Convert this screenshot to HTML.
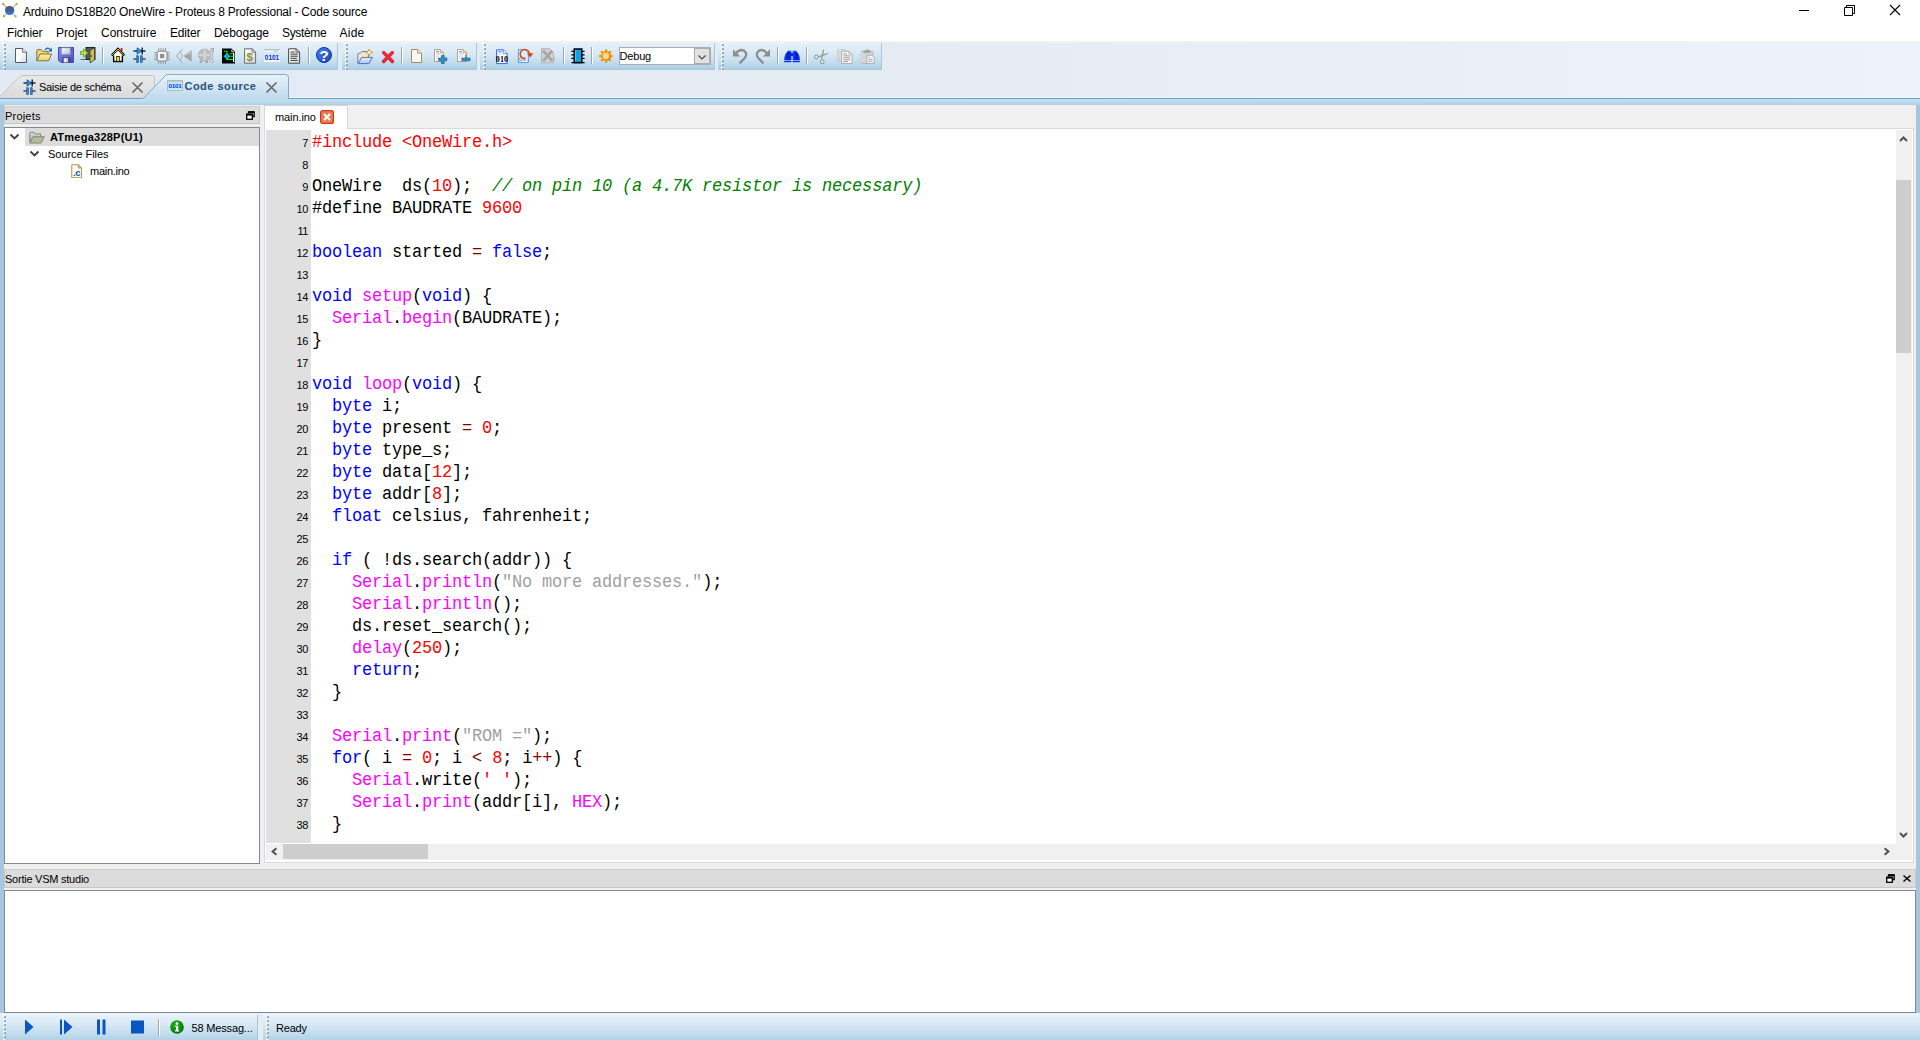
<!DOCTYPE html>
<html><head><meta charset="utf-8"><title>Proteus</title>
<style>
*{box-sizing:border-box;margin:0;padding:0}
html,body{width:1920px;height:1040px;overflow:hidden;background:#f0f0f0}
body{font-family:"Liberation Sans",sans-serif;font-size:11px;color:#000;position:relative}
.a{position:absolute}
.t{position:absolute;white-space:pre;line-height:14px;height:14px}
#title{left:0;top:0;width:1920px;height:23px;background:#fff}
#menu{left:0;top:23px;width:1920px;height:18px;background:#fff}
#tbarea{left:0;top:41px;width:1920px;height:57px;background:linear-gradient(90deg,#e3eaf3 0%,#e4ebf3 45%,#ecf3fa 100%)}
#tbtop{left:0;top:41px;width:1920px;height:2px;background:linear-gradient(#f3f3f3,#edf0f3)}
.tb{position:absolute;top:43px;height:27px;background:linear-gradient(#e5f0f8 0%,#dcebf5 30%,#cbe2f1 60%,#b6d6ea 85%,#a7c9df 100%);border-right:1px solid #a6c7dc}
.grip{position:absolute;top:0px;width:3px;height:27px;background:repeating-linear-gradient(transparent 0,transparent 1px,#98abba 1px,#98abba 3px,transparent 3px,transparent 4px) 1px 0/2px 100% no-repeat,repeating-linear-gradient(#fff 0,#fff 2px,transparent 2px,transparent 4px) 0 0/2px 100% no-repeat}
.sep{position:absolute;top:47px;width:1px;height:17px;background:#a0a6ac;box-shadow:1px 0 0 #fbfdfe}
.ic{position:absolute;width:16px;height:16px}
#band{left:0;top:97px;width:1920px;height:8px;background:linear-gradient(#f0f7fa 0,#f0f7fa 1px,#6f9dbd 1px,#6f9dbd 2px,#c4e2f5 2px,#b9d9ec 5px,#aecfe3 8px)}
#ledge{left:0;top:105px;width:4px;height:908px;background:#a8c6dd}
#redge{left:1916px;top:105px;width:4px;height:908px;background:#a8c6dd}
.dockh{position:absolute;background:#dcdcdc;border:1px solid #c6c6c6;border-top-color:#cfcfcf}
.box{position:absolute;background:#fff;border:1px solid #828790}
#status{left:0;top:1013px;width:1920px;height:27px;background:linear-gradient(#e9f3fa 0%,#dcebf5 35%,#c6dfef 70%,#b2d2e6 100%)}
.code{position:absolute;left:312px;font-family:"Liberation Mono",monospace;font-size:17px;letter-spacing:-0.2px;line-height:22px;height:22px;white-space:pre;color:#000;transform:scaleY(1.06);transform-origin:0 15px}
.ln{position:absolute;left:266px;width:42px;text-align:right;font-size:11px;letter-spacing:-0.4px;line-height:22px;height:22px;color:#000}
.k{color:#0000ff}.f{color:#ff00ff}.n{color:#ff0000}.p{color:#ff0000}.c{color:#008000;font-style:italic}.s{color:#a0a0a0}.o{color:#800000}
</style></head>
<body>
<div id="title" class="a"></div>
<svg class="ic" style="left:0px;top:0px;width:20px;height:20px" viewBox="0 0 20 20" >
<defs><linearGradient id="apg" x1="0" y1="0" x2="0" y2="1"><stop offset="0" stop-color="#3a475e"/><stop offset=".45" stop-color="#4a5c7c"/><stop offset=".62" stop-color="#3a6ab8"/><stop offset="1" stop-color="#2f7ae4"/></linearGradient></defs>
<path d="M3.2 4L15.6 16.3M16.5 4.2L4 16.2" stroke="#b4b8c2" stroke-width="1.1"/>
<path d="M3.4 6.6Q6 9 8 14.6M16.4 6.6Q14 9 11.6 14.6" stroke="#dcdee4" stroke-width=".8" fill="none"/>
<circle cx="9.6" cy="10.5" r="4.6" fill="url(#apg)"/>
<ellipse cx="9.4" cy="8.2" rx="2.6" ry="1.6" fill="#5a6a88" opacity=".55"/>
<circle cx="3.2" cy="4" r="1.15" fill="#c89c30"/><circle cx="16.5" cy="4.2" r="1.15" fill="#c89c30"/>
<circle cx="4" cy="16.2" r="1.15" fill="#c89c30"/><circle cx="15.6" cy="16.3" r="1.15" fill="#c89c30"/>
</svg>
<div class="t" style="left:23px;top:5px;font-size:12px;letter-spacing:-0.205px;">Arduino DS18B20 OneWire - Proteus 8 Professional - Code source</div>
<svg class="a" style="left:1790px;top:0;width:130px;height:23px" viewBox="0 0 130 23"><path d="M9 10.5H19" stroke="#000" stroke-width="1" fill="none"/><path d="M54.5 7.5H62.5V15.5H54.5Z M56.5 7.5V5.5H64.5V13.5H62.5" stroke="#000" stroke-width="1" fill="none"/><path d="M100 5L110 15M110 5L100 15" stroke="#000" stroke-width="1.1" fill="none"/></svg>
<div id="menu" class="a"></div>
<div class="t" style="left:7px;top:26px;font-size:12px;letter-spacing:-0.07px;">Fichier</div>
<div class="t" style="left:56px;top:26px;font-size:12px;">Projet</div>
<div class="t" style="left:101px;top:26px;font-size:12px;">Construire</div>
<div class="t" style="left:170px;top:26px;font-size:12px;letter-spacing:-0.17px;">Editer</div>
<div class="t" style="left:214px;top:26px;font-size:12px;letter-spacing:-0.05px;">Débogage</div>
<div class="t" style="left:282px;top:26px;font-size:12px;letter-spacing:-0.34px;">Système</div>
<div class="t" style="left:339.5px;top:26px;font-size:12px;letter-spacing:0.24px;">Aide</div>
<div id="tbarea" class="a"></div><div id="tbtop" class="a"></div>
<div class="tb" style="left:0px;width:338px"><div class="grip" style="left:3px"></div></div>
<div class="tb" style="left:342px;width:135px"><div class="grip" style="left:3px"></div></div>
<div class="tb" style="left:480px;width:235px"><div class="grip" style="left:3px"></div></div>
<div class="tb" style="left:718px;width:164px"><div class="grip" style="left:3px"></div></div>
<div class="sep" style="left:102px"></div>
<div class="sep" style="left:308px"></div>
<div class="sep" style="left:401px"></div>
<div class="sep" style="left:563px"></div>
<div class="sep" style="left:591px"></div>
<div class="sep" style="left:777px"></div>
<div class="sep" style="left:806px"></div>
<svg class="ic" style="left:13px;top:47px;width:16px;height:16px" viewBox="0 0 16 16" preserveAspectRatio="none">
<defs><linearGradient id="nwg" x1="0" y1="0" x2="1" y2="1"><stop offset="0" stop-color="#fff"/><stop offset=".5" stop-color="#fbfbfb"/><stop offset="1" stop-color="#d4d9dd"/></linearGradient></defs>
<path d="M2.5 1.5H9.6L13.5 5.2V15.5H2.5Z" fill="url(#nwg)" stroke="#5a5a5a"/>
<path d="M9.6 1.5V5.2H13.5" fill="#fff" stroke="#5a5a5a" stroke-width=".9"/>
</svg>
<svg class="ic" style="left:36px;top:47px;width:16px;height:16px" viewBox="0 0 16 16" preserveAspectRatio="none">
<defs><linearGradient id="ofg" x1="0" y1="0" x2="0" y2="1"><stop offset="0" stop-color="#fbf3a0"/><stop offset="1" stop-color="#e2d268"/></linearGradient></defs>
<path d="M9 3Q11.6 -0.4 14.6 2.6" stroke="#2a5cb0" stroke-width="1.2" fill="none"/>
<path d="M15.8 0.8V4.4H12.2Z" fill="#1c4fa0"/>
<path d="M0.8 13.6V3.6Q0.8 2.6 1.8 2.6H5.2L6.8 4.4H12V7" fill="#e8d878" stroke="#8a7040"/>
<path d="M0.8 13.8L4 7H15.6L12.6 13.8Z" fill="url(#ofg)" stroke="#8a7040"/>
</svg>
<svg class="ic" style="left:58px;top:47px;width:16px;height:16px" viewBox="0 0 16 16" preserveAspectRatio="none">
<defs><linearGradient id="svg1" x1="0" y1="0" x2="1" y2="1"><stop offset="0" stop-color="#8a8aec"/><stop offset="1" stop-color="#5252bc"/></linearGradient>
<linearGradient id="svg2" x1="0" y1="0" x2="1" y2="1"><stop offset="0" stop-color="#fff"/><stop offset="1" stop-color="#a9c4d0"/></linearGradient></defs>
<path d="M0.5 0.5H15.5V15.5H2.8L0.5 13.2Z" fill="url(#svg1)" stroke="#4a4ab0"/>
<rect x="3.6" y="0.9" width="8.6" height="6.4" fill="url(#svg2)" stroke="#8c94c8" stroke-width=".6"/>
<rect x="4.4" y="10.4" width="8" height="5" fill="#3c3c94"/>
<rect x="5.6" y="11" width="4.6" height="4.4" fill="#c8c8c8"/>
<rect x="6.4" y="11.6" width="1.6" height="3.4" fill="#fff"/>
<rect x="13.4" y="2" width="1" height="1.2" fill="#222"/>
<rect x="13.2" y="11" width="1" height="4" fill="#4a4ab0"/>
</svg>
<svg class="ic" style="left:80px;top:47px;width:16px;height:16px" viewBox="0 0 16 16" preserveAspectRatio="none">
<rect x="6" y="0.5" width="9" height="12" fill="#5a5a5a" stroke="#222"/>
<path d="M10 3.5L14.5 0.8V13L10 15.8Z" fill="#cdbf5e" stroke="#3a3a1a" stroke-width=".8"/>
<circle cx="11.3" cy="9" r=".7" fill="#222"/>
<path d="M0.5 4.5H3.5V1.8L7.8 6L3.5 10.2V7.5H0.5Z" fill="#b6e34a" stroke="#5e9a1c" stroke-width=".8"/>
<path d="M0.5 12.5H6" stroke="#666" stroke-width="1"/>
</svg>
<svg class="ic" style="left:111px;top:47px;width:14px;height:16px" viewBox="0 0 16 16" preserveAspectRatio="none">
<path d="M3 8V14.5H13V8" fill="#fff" stroke="#000" stroke-width="1.6"/>
<path d="M0.8 8.4L8 1.8L15.2 8.4" fill="#fff" stroke="#000" stroke-width="2.4" stroke-linejoin="miter"/>
<path d="M1.4 8L8 2L14.6 8" fill="none" stroke="#ffe800" stroke-width=".9"/>
<rect x="6.5" y="9.5" width="3" height="5" fill="#ffe800" stroke="#000" stroke-width=".8"/>
<rect x="11.2" y="1" width="1.8" height="3.6" fill="#e00000"/>
</svg>
<svg class="ic" style="left:133px;top:47px;width:13px;height:16px" viewBox="0 0 16 16" preserveAspectRatio="none">
<path d="M0.5 4H15.5" stroke="#000" stroke-width="1.2"/>
<path d="M5 0.8V7.2L11 4Z" fill="#1e96f0" stroke="#0a3c8a" stroke-width=".7"/>
<path d="M11.3 0.4V7.6" stroke="#000" stroke-width="1.5"/>
<path d="M0.5 12H4.5M11.5 12H15.5" stroke="#000" stroke-width="1.2"/>
<rect x="4.6" y="8.8" width="2.3" height="6.6" fill="#1e82e0" stroke="#062a66" stroke-width=".5"/>
<rect x="9.1" y="8.8" width="2.3" height="6.6" fill="#1e82e0" stroke="#062a66" stroke-width=".5"/>
</svg>
<svg class="ic" style="left:154px;top:47.5px;width:16px;height:16px" viewBox="0 0 16 16" preserveAspectRatio="none">
<g stroke="#8c8c8c" stroke-width=".9" fill="none">
<path d="M4.6 0.2V3M6.9 0.2V3M9.2 0.2V3M11.5 0.2V3M4.6 13V15.8M6.9 13V15.8M9.2 13V15.8M11.5 13V15.8M0.2 4.6H3M0.2 6.9H3M0.2 9.2H3M0.2 11.5H3M13 4.6H15.8M13 6.9H15.8M13 9.2H15.8M13 11.5H15.8"/>
<rect x="3.2" y="3.2" width="9.8" height="9.8" rx="1.4" fill="#f0f5f9" stroke-width="1.1"/>
</g>
<rect x="6" y="6" width="4.2" height="4.2" fill="#909090"/>
</svg>
<svg class="ic" style="left:176px;top:47.5px;width:16px;height:16px" viewBox="0 0 16 16" preserveAspectRatio="none">
<path d="M6.2 1.2L0.6 8L6.2 14.8" fill="none" stroke="#a2a2a2" stroke-width="1"/>
<path d="M4.6 3.6Q7.4 8 4.6 12.4" fill="none" stroke="#b4b4b4" stroke-width=".9"/>
<path d="M7.4 8L15.6 2.2V13.8Z" fill="#a4a4a4"/>
<path d="M7.4 8L15.6 2.2V6Z" fill="#bcbcbc"/>
</svg>
<svg class="ic" style="left:198px;top:47.5px;width:16px;height:16px" viewBox="0 0 16 16" preserveAspectRatio="none">
<circle cx="6.6" cy="7" r="6" fill="#bdbdbd" stroke="#a4a4a4" stroke-width=".8"/>
<path d="M6.6 1.2V12.8M0.8 7H12.4" stroke="#dedede" stroke-width="1.3"/>
<rect x="4.8" y="5.2" width="3.6" height="3.6" fill="#d0d0d0"/>
<rect x="1.6" y="12.6" width="2.4" height="2.4" fill="#a8a8a8"/><rect x="7.6" y="12.6" width="2.4" height="2.4" fill="#a8a8a8"/>
<rect x="13" y="0.4" width="2.6" height="2.6" fill="#e4e4e4" stroke="#9a9a9a" stroke-width=".8"/>
<path d="M14.4 3V11" stroke="#a8a8a8" stroke-width=".9"/>
<path d="M13.4 10.6L15.8 13L13.8 15L11.4 12.6Z" fill="#dcdcdc" stroke="#a0a0a0" stroke-width=".8"/>
</svg>
<svg class="ic" style="left:221px;top:47.5px;width:16px;height:16px" viewBox="0 0 16 16" preserveAspectRatio="none">
<path d="M1 0.4H10.2L14 4V15.4H1Z" fill="#000"/>
<path d="M10 0.8V4.2H13.6Z" fill="#fff" stroke="#000" stroke-width=".7"/>
<rect x="12" y="4.6" width="1.3" height="9.4" fill="#fff"/>
<path d="M2.6 3.2H6V8.2M2.6 8.2H12M6 8.2V11.4H12M8.6 5.8H12" stroke="#00f000" stroke-width="1.1" fill="none"/>
<path d="M6 5L8.8 8.2L6 11.4L3.2 8.2Z" fill="#00e8ff"/>
<rect x="5.4" y="6.8" width="1.2" height="2.8" fill="#0a3cc8"/>
</svg>
<svg class="ic" style="left:242px;top:47.5px;width:16px;height:16px" viewBox="0 0 16 16" preserveAspectRatio="none">
<defs><linearGradient id="bmg" x1="0" y1="0" x2="1" y2="1"><stop offset="0" stop-color="#fff"/><stop offset="1" stop-color="#d4d8dc"/></linearGradient></defs>
<path d="M2.6 0.8H10L13.6 4.2V15.2H2.6Z" fill="url(#bmg)" stroke="#6a6a6a"/>
<path d="M10 0.8V4.2H13.6Z" fill="#f4f4f4" stroke="#6a6a6a" stroke-width=".8"/>
<text x="7.8" y="13.2" font-family="Liberation Sans" font-size="11.5" font-weight="bold" fill="#8e8e3a" text-anchor="middle">$</text>
</svg>
<svg class="ic" style="left:264px;top:48.5px;width:16px;height:13px" viewBox="0 0 16 13" preserveAspectRatio="none">
<rect x="0" y="0" width="16" height="13" fill="#f2f6fa"/>
<rect x="0" y="0" width="16" height="1.6" fill="#b9bec4"/>
<rect x="0" y="1.6" width="16" height="1.8" fill="#f4f4f4"/>
<rect x="10" y="2" width="4" height="1" fill="#c8ccd0"/>
<rect x="0" y="3.4" width="16" height="4" fill="#c4ecf8"/>
<text x="8" y="10.6" font-family="Liberation Sans" font-size="6.6" font-weight="bold" fill="#2222e0" text-anchor="middle" letter-spacing="-.1">0101</text>
</svg>
<svg class="ic" style="left:286px;top:47.5px;width:16px;height:16px" viewBox="0 0 16 16" preserveAspectRatio="none">
<defs><linearGradient id="ntg" x1="0" y1="0" x2="1" y2="1"><stop offset="0" stop-color="#fff"/><stop offset="1" stop-color="#dcdfe2"/></linearGradient></defs>
<path d="M2.6 0.8H10L13.6 4.2V15.2H2.6Z" fill="url(#ntg)" stroke="#444"/>
<path d="M10 0.8V4.2H13.6Z" fill="#f4f4f4" stroke="#444" stroke-width=".8"/>
<path d="M4.4 4H8.6M4.4 6.1H11.8M4.4 8.2H11.8M4.4 10.3H10.8M4.4 12.4H11.8" stroke="#3c3c3c" stroke-width="1"/>
</svg>
<svg class="ic" style="left:316px;top:47px;width:16px;height:16px" viewBox="0 0 16 16" preserveAspectRatio="none">
<defs><linearGradient id="hg" x1="0" y1="0" x2="1" y2="1"><stop offset="0" stop-color="#5484ea"/><stop offset=".5" stop-color="#3562cc"/><stop offset="1" stop-color="#1c44a4"/></linearGradient></defs>
<circle cx="8" cy="8" r="7.5" fill="url(#hg)" stroke="#0a34c4" stroke-width="1"/>
<text x="8.1" y="13.5" font-family="Liberation Sans" font-size="15.5" font-weight="bold" fill="#fff" text-anchor="middle">?</text>
</svg>
<svg class="ic" style="left:356.5px;top:49px;width:16px;height:16px" viewBox="0 0 16 16" preserveAspectRatio="none">
<defs><linearGradient id="opg" x1="0" y1="0" x2="0" y2="1"><stop offset="0" stop-color="#e4eefc"/><stop offset="1" stop-color="#a9c8f0"/></linearGradient></defs>
<path d="M0.8 14.2V5.2Q0.8 4.4 1.6 4.4H3.2L4.8 2.6H11.4V8" fill="#f6e6c4" stroke="#6a6cc0" stroke-width=".9"/>
<path d="M1 14.6L4.6 8.4H15.4L11.8 14.6Z" fill="url(#opg)" stroke="#4a5cc0" stroke-width=".9"/>
<path d="M12.2 -0.4L13.2 2.4L16 3.4L13.2 4.4L12.2 7.2L11.2 4.4L8.4 3.4L11.2 2.4Z" fill="#fffbe8" stroke="#c8981a" stroke-width=".8"/>
</svg>
<svg class="ic" style="left:379.5px;top:48.5px;width:16px;height:16px" viewBox="0 0 16 16" preserveAspectRatio="none">
<defs><linearGradient id="rxg" x1="0" y1="0" x2="0" y2="1"><stop offset="0" stop-color="#f04a58"/><stop offset="1" stop-color="#d81828"/></linearGradient></defs>
<path d="M3.6 3.6L12.4 12.4M12.4 3.6L3.6 12.4" stroke="url(#rxg)" stroke-width="3.6" stroke-linecap="round" fill="none"/>
<path d="M3.6 3.6L12.4 12.4M12.4 3.6L3.6 12.4" stroke="#e62c3c" stroke-width="2.6" stroke-linecap="round" fill="none"/>
</svg>
<svg class="ic" style="left:408px;top:48px;width:16px;height:16px" viewBox="0 0 16 16" preserveAspectRatio="none">
<path d="M3.5 1.5H9.6L13.5 5.2V14.5H3.5Z" fill="#f6f8fd" stroke="#a88a4a"/>
<path d="M9.6 1.5V5.2H13.5" fill="#ece6d4" stroke="#a88a4a" stroke-width=".8"/>
</svg>
<svg class="ic" style="left:432px;top:48px;width:16px;height:16px" viewBox="0 0 16 16" preserveAspectRatio="none">
<path d="M2.5 1.5H8.2L11.5 4.6V13.5H2.5Z" fill="#fbfcfe" stroke="#a89a74" stroke-width=".9"/>
<path d="M8.2 1.5V4.6H11.5" fill="#ecd9a8" stroke="#a89a74" stroke-width=".7"/>
<path d="M4.2 3.8H7" stroke="#5a78b4" stroke-width="1"/>
<path d="M4.2 6H9.4M4.2 8.2H6.4M4.2 10.4H5.6" stroke="#b4c0d4" stroke-width=".9"/>
<path d="M9.4 7.4H12.2V10H14.9V12.8H12.2V15.6H9.4V12.8H6.6V10H9.4Z" fill="#3a8cc0" stroke="#1f648f" stroke-width=".7" stroke-linejoin="round"/>
</svg>
<svg class="ic" style="left:455px;top:48px;width:16px;height:16px" viewBox="0 0 16 16" preserveAspectRatio="none">
<path d="M2.5 1.5H8.2L11.5 4.6V13.5H2.5Z" fill="#fbfcfe" stroke="#a89a74" stroke-width=".9"/>
<path d="M8.2 1.5V4.6H11.5" fill="#ecd9a8" stroke="#a89a74" stroke-width=".7"/>
<path d="M4.2 3.8H7" stroke="#5a78b4" stroke-width="1"/>
<path d="M4.2 6H9.4M4.2 8.2H7.4M4.2 10.4H5.6" stroke="#b4c0d4" stroke-width=".9"/>
<path d="M10.8 6.6V10" stroke="#1f648f" stroke-width=".9"/>
<rect x="6.6" y="10" width="8.6" height="2.8" rx="1" fill="#3a8cc0" stroke="#1f648f" stroke-width=".7"/>
</svg>
<svg class="ic" style="left:494px;top:48.5px;width:16px;height:16px" viewBox="0 0 16 16" preserveAspectRatio="none">
<path d="M2.6 0.8H9.2L13.2 4.6V14.6H2.6Z" fill="#fff" stroke="#2a6ae0" stroke-width="1"/>
<path d="M9.2 0.8V4.6H13.2" fill="#e4edfc" stroke="#2a6ae0" stroke-width=".7"/>
<path d="M4.2 2.8H7.6" stroke="#4a86e8" stroke-width="1.1"/>
<path d="M3.4 5H10" stroke="#c4d8f8" stroke-width=".9"/>
<text x="8" y="12.9" font-family="Liberation Serif" font-size="8" font-weight="bold" fill="#000" text-anchor="middle" letter-spacing=".2">010</text>
</svg>
<svg class="ic" style="left:516.5px;top:48px;width:16px;height:16px" viewBox="0 0 16 16" preserveAspectRatio="none">
<path d="M1.4 1.6H8L11.4 4.8V14.6H1.4Z" fill="#dfeafc" stroke="#5a8ce4" stroke-width=".9"/>
<text x="5.6" y="13" font-family="Liberation Serif" font-size="7" fill="#7a86b0" text-anchor="middle">01</text>
<path d="M12.4 6.4A4.6 4.6 0 1 0 8.6 10.6" stroke="#d8480c" stroke-width="1.5" fill="none"/>
<path d="M10 5.2H16.4L13.2 9.6Z" fill="#d8480c"/>
</svg>
<svg class="ic" style="left:540px;top:48px;width:16px;height:16px" viewBox="0 0 16 16" preserveAspectRatio="none">
<path d="M1.6 0.6H9.6L13.4 4.2V14.8H1.6Z" fill="#d2d2d2" stroke="#b0b0b0" stroke-width=".9"/>
<path d="M3.2 2.6L12.2 13M12.2 2.6L3.2 13" stroke="#a4a4a4" stroke-width="2.6"/>
<path d="M13.4 8Q15.4 10 13.6 13" stroke="#bcbcbc" stroke-width="1" fill="none"/>
</svg>
<svg class="ic" style="left:569.5px;top:47.5px;width:16px;height:16px" viewBox="0 0 16 16" preserveAspectRatio="none">
<g stroke="#000" stroke-width="1.2"><path d="M1.4 3.4H4.2M1.4 6.9H4.2M1.4 10.4H4.2M11.8 3.4H14.6M11.8 6.9H14.6M11.8 10.4H14.6M1.4 14.6H14.6"/></g>
<rect x="4.2" y="1" width="7.6" height="13.6" fill="#12a0e8" stroke="#000" stroke-width="1.5"/>
<path d="M5.4 2.4V13.4" stroke="#5ac4f6" stroke-width="1"/>
</svg>
<svg class="ic" style="left:598.5px;top:48.5px;width:14px;height:14px" viewBox="0 0 16 16" preserveAspectRatio="none">
<defs><linearGradient id="grg" x1="0" y1="0" x2="1" y2="1"><stop offset="0" stop-color="#fbb324"/><stop offset="1" stop-color="#e8780a"/></linearGradient></defs>
<g fill="url(#grg)">
<circle cx="8" cy="8" r="5.8"/>
<g><rect x="6.6" y="0.2" width="2.8" height="3" rx=".7"/><rect x="6.6" y="12.8" width="2.8" height="3" rx=".7"/></g>
<g transform="rotate(45 8 8)"><rect x="6.6" y="0.2" width="2.8" height="3" rx=".7"/><rect x="6.6" y="12.8" width="2.8" height="3" rx=".7"/></g><g transform="rotate(90 8 8)"><rect x="6.6" y="0.2" width="2.8" height="3" rx=".7"/><rect x="6.6" y="12.8" width="2.8" height="3" rx=".7"/></g><g transform="rotate(135 8 8)"><rect x="6.6" y="0.2" width="2.8" height="3" rx=".7"/><rect x="6.6" y="12.8" width="2.8" height="3" rx=".7"/></g>
</g>
<circle cx="8" cy="8" r="3.3" fill="#fdeeb0"/>
<circle cx="8" cy="8" r="1.7" fill="#fdfdf6" stroke="#f0a020" stroke-width=".7"/>
</svg>
<svg class="ic" style="left:732px;top:48px;width:16px;height:16px" viewBox="0 0 16 16" preserveAspectRatio="none">
<path d="M1 1.3V8.4H8.2Z" fill="#8e8e8e"/>
<path d="M4.2 5.2Q7.6 0.6 12 2.6Q16.2 6 12.4 10.4L7.6 15.4" stroke="#8e8e8e" stroke-width="2.3" fill="none" stroke-linejoin="round"/>
</svg>
<svg class="ic" style="left:755px;top:48px;width:16px;height:16px" viewBox="0 0 16 16" preserveAspectRatio="none">
<path d="M15 1.3V8.4H7.8Z" fill="#8e8e8e"/>
<path d="M11.8 5.2Q8.4 0.6 4 2.6Q-0.2 6 3.6 10.4L8.4 15.4" stroke="#8e8e8e" stroke-width="2.3" fill="none" stroke-linejoin="round"/>
</svg>
<svg class="ic" style="left:784px;top:48.5px;width:16px;height:15px" viewBox="0 0 16 16" preserveAspectRatio="none">
<defs><linearGradient id="bg1" x1="0" y1="0" x2="1" y2="0"><stop offset="0" stop-color="#1a50f0"/><stop offset=".5" stop-color="#0418d8"/><stop offset="1" stop-color="#0a30e8"/></linearGradient></defs>
<path d="M4 1.8H6.6Q7.4 1.8 7.4 3V11.6H0.2V9.2Q1.2 4.6 4 1.8Z" fill="url(#bg1)"/>
<path d="M12 1.8H9.4Q8.6 1.8 8.6 3V11.6H15.8V9.2Q14.8 4.6 12 1.8Z" fill="url(#bg1)"/>
<rect x="7" y="4.4" width="2" height="3.2" fill="#0a28d8"/>
<rect x="0.2" y="12.4" width="7.2" height="1.7" fill="#0a30e8"/><rect x="8.6" y="12.4" width="7.2" height="1.7" fill="#0a30e8"/>
<rect x="4.4" y="1.8" width="2" height="1" fill="#5a8af8"/><rect x="9.6" y="1.8" width="2" height="1" fill="#5a8af8"/>
</svg>
<svg class="ic" style="left:813px;top:48.5px;width:16px;height:16px" viewBox="0 0 16 16" preserveAspectRatio="none">
<path d="M10.6 0.6L8.6 10.2M14.8 4.4L5 8" stroke="#8f8f8f" stroke-width="1.1" fill="none"/>
<circle cx="3.4" cy="8" r="1.9" fill="#eef4f8" fill-opacity=".5" stroke="#8f8f8f" stroke-width="1"/>
<circle cx="9.2" cy="12.8" r="1.9" fill="#eef4f8" fill-opacity=".5" stroke="#8f8f8f" stroke-width="1"/>
</svg>
<svg class="ic" style="left:836.5px;top:48.5px;width:16px;height:15px" viewBox="0 0 16 16" preserveAspectRatio="none">
<path d="M0.8 1H8.2L10.6 3.4V13H0.8Z" fill="#f2f2f2" stroke="#b8b8b8" stroke-width=".9"/>
<path d="M1.8 3.6H3.6M1.8 5.6H3.6M1.8 7.6H3.6M1.8 9.6H3.6M1.8 11.4H3.6" stroke="#b4b4b4" stroke-width="1"/>
<path d="M4.6 2.4H12L15.2 5.4V15.4H4.6Z" fill="#f8f8f8" stroke="#a6a6a6" stroke-width=".9"/>
<path d="M12 2.4V5.4H15.2" fill="#e2e2e2" stroke="#a6a6a6" stroke-width=".7"/>
<path d="M6.4 5.2H10M6.4 7.3H13.4M6.4 9.4H13.4M6.4 11.5H13.4M6.4 13.4H11" stroke="#9c9c9c" stroke-width="1"/>
</svg>
<svg class="ic" style="left:860px;top:48.5px;width:15px;height:15px" viewBox="0 0 16 16" preserveAspectRatio="none">
<path d="M4.6 2.4L6.4 0.4H9L10.8 2.4Z" fill="#a2a2a2"/>
<rect x="1.2" y="2.2" width="12.6" height="13.2" rx="1" fill="#d4d4d4" stroke="#b2b2b2" stroke-width=".9"/>
<path d="M3.2 2.2L4.4 4H10.6L11.8 2.2Z" fill="#9e9e9e"/>
<path d="M2 3V14.6" stroke="#e6e6e6" stroke-width="1"/>
<path d="M7.4 6.6H12.6L15.2 9V15.4H7.4Z" fill="#f8f8f8" stroke="#a6a6a6" stroke-width=".9"/>
<path d="M9 8.8H10.8M9 10.9H13.4M9 13H13.4" stroke="#9c9c9c" stroke-width="1"/>
</svg>
<div class="a" style="left:619px;top:47px;width:92px;height:18px;background:#fff;border:1px solid #abadb3"></div>
<div class="a" style="left:694px;top:48px;width:16px;height:16px;background:#e1e1e1;border:1px solid #adadad"></div>
<svg class="a" style="left:697px;top:53.5px;width:10px;height:7px" viewBox="0 0 10 7"><path d="M1.5 1.5L5 5L8.5 1.5" stroke="#444" stroke-width="1.1" fill="none"/></svg>
<div class="t" style="left:619.5px;top:49px;font-size:11px;letter-spacing:-0.18px;">Debug</div>
<div id="band" class="a"></div>
<svg class="a" style="left:0;top:70px;width:300px;height:36px" viewBox="0 0 300 36"><defs><linearGradient id="gi" x1="0" y1="0" x2="0" y2="1"><stop offset="0" stop-color="#e9e9e9"/><stop offset="1" stop-color="#dadada"/></linearGradient><linearGradient id="ga" x1="0" y1="0" x2="0" y2="1"><stop offset="0" stop-color="#e9f3f9"/><stop offset="0.5" stop-color="#d2e6f3"/><stop offset="1" stop-color="#bcd9ec"/></linearGradient></defs><path d="M-2 28.5 L21 5.5 H152.5 Q154.5 5.5 154.5 7.5 V28.5 Z" fill="url(#gi)" stroke="#c2c6ca" stroke-width="1"/><path d="M-2 28.5H144" stroke="#6f9dbd" stroke-width="1"/><path d="M142.5 29.5 L166.5 4.5 H285.5 Q288.5 4.5 288.5 7.5 V29.5 Z" fill="url(#ga)"/><path d="M144 27 H288 V29.6 H141.5 Z" fill="#c0ddf0"/><path d="M142.5 29 L166.5 4.5 H285.5 Q288.5 4.5 288.5 7.5 V28.5" fill="none" stroke="#7fabc9" stroke-width="1"/></svg>
<svg class="ic" style="left:22.5px;top:79px;width:13px;height:16px" viewBox="0 0 16 16" preserveAspectRatio="none">
<path d="M0.5 4H15.5" stroke="#000" stroke-width="1.2"/>
<path d="M5 0.8V7.2L11 4Z" fill="#1e96f0" stroke="#0a3c8a" stroke-width=".7"/>
<path d="M11.3 0.4V7.6" stroke="#000" stroke-width="1.5"/>
<path d="M0.5 12H4.5M11.5 12H15.5" stroke="#000" stroke-width="1.2"/>
<rect x="4.6" y="8.8" width="2.3" height="6.6" fill="#1e82e0" stroke="#062a66" stroke-width=".5"/>
<rect x="9.1" y="8.8" width="2.3" height="6.6" fill="#1e82e0" stroke="#062a66" stroke-width=".5"/>
</svg>
<div class="t" style="left:39px;top:80px;font-size:11px;letter-spacing:-0.3px;">Saisie de schéma</div>
<svg class="a" style="left:130.5px;top:80.5px;width:13px;height:13px" viewBox="0 0 13 13"><path d="M1.5 1.5L11.5 11.5M11.5 1.5L1.5 11.5" stroke="#666" stroke-width="1.6" fill="none"/></svg>
<svg class="ic" style="left:167px;top:80px;width:16px;height:11px" viewBox="0 0 16 11" >
<rect x="0.5" y="0.5" width="15" height="10" fill="#cfeeff" stroke="#b0b8c0"/>
<rect x="1" y="1" width="14" height="1.6" fill="#c8ccd0"/>
<rect x="1" y="2.6" width="14" height="6.4" fill="#aef2ff"/>
<text x="8" y="8.4" font-family="Liberation Sans" font-size="6.2" font-weight="bold" fill="#2a2aff" text-anchor="middle" letter-spacing="-.2">0101</text>
</svg>
<div class="t" style="left:184.5px;top:79px;font-size:11px;letter-spacing:0.48px;color:#2a527a;font-weight:bold;">Code source</div>
<svg class="a" style="left:264.5px;top:80.5px;width:13px;height:13px" viewBox="0 0 13 13"><path d="M1.5 1.5L11.5 11.5M11.5 1.5L1.5 11.5" stroke="#666" stroke-width="1.6" fill="none"/></svg>
<div id="ledge" class="a"></div><div id="redge" class="a"></div>
<div class="dockh" style="left:4px;top:106px;width:256px;height:18px"></div>
<div class="t" style="left:5px;top:109px;font-size:11px;letter-spacing:0.2px;">Projets</div>
<svg class="ic" style="left:246px;top:111px;width:9px;height:9px" viewBox="0 0 9 9" >
<path d="M2.5 2.5V0.8H8.2V5.5H6.5" fill="none" stroke="#000" stroke-width="1.3"/>
<path d="M2.5 1.2H8.2" stroke="#000" stroke-width="1.8"/>
<rect x="0.7" y="3.2" width="5.6" height="5.1" fill="#fff" stroke="#000" stroke-width="1.3"/>
<path d="M0.7 3.7H6.3" stroke="#000" stroke-width="1.8"/>
</svg>
<div class="box" style="left:4px;top:127px;width:256px;height:737px"></div>
<div class="a" style="left:25px;top:128px;width:234px;height:18px;background:#dcdcdc"></div>
<svg class="a" style="left:9px;top:133px;width:11px;height:8px" viewBox="0 0 11 8"><path d="M1.5 1.5L5.5 5.5L9.5 1.5" stroke="#404040" stroke-width="1.9" fill="none"/></svg>
<svg class="ic" style="left:29px;top:131px;width:16px;height:13px" viewBox="0 0 16 14" preserveAspectRatio="none">
<defs><linearGradient id="fdg" x1="0" y1="0" x2="0" y2="1"><stop offset="0" stop-color="#c4dcec"/><stop offset="1" stop-color="#a4b8a8"/></linearGradient></defs>
<path d="M0.8 12V2.6Q0.8 1.4 2 1.4H5.2L6.8 3.2H11.6V6" fill="url(#fdg)" stroke="#7e7e62" stroke-width=".9"/>
<path d="M0.8 13L4 6.2H15.4L12 13Z" fill="#b4bc9c" stroke="#7e7e62" stroke-width=".9"/>
</svg>
<div class="t" style="left:50px;top:130px;font-size:11px;letter-spacing:0.24px;font-weight:bold;">ATmega328P(U1)</div>
<svg class="a" style="left:29px;top:150px;width:11px;height:8px" viewBox="0 0 11 8"><path d="M1.5 1.5L5.5 5.5L9.5 1.5" stroke="#404040" stroke-width="1.9" fill="none"/></svg>
<div class="t" style="left:48px;top:147px;font-size:11px;letter-spacing:-0.05px;">Source Files</div>
<svg class="ic" style="left:70.5px;top:163.5px;width:11.6px;height:14.5px" viewBox="0 0 12 15" >
<path d="M0.8 0.8H7.5L11 4.2V14.2H0.8Z" fill="#fff" stroke="#b08a3a" stroke-width="1"/>
<path d="M7.5 0.8V4.2H11Z" fill="#ecc878" stroke="#b08a3a" stroke-width=".8"/>
<text x="5.9" y="12.6" font-family="Liberation Sans" font-size="10" font-weight="bold" fill="#1f4aa0" text-anchor="middle" letter-spacing="-.3">.c</text>
</svg>
<div class="t" style="left:90px;top:164px;font-size:11px;letter-spacing:-0.28px;">main.ino</div>
<div class="a" style="left:264px;top:105px;width:1650px;height:758px;background:#f0f0f0"></div>
<div class="a" style="left:264px;top:128px;width:1650px;height:735px;background:#fff;border:1px solid #d9d9d9"></div>
<div class="a" style="left:264px;top:105px;width:84px;height:24px;background:#fff;border:1px solid #d6d6d6;border-bottom:none"></div><div class="a" style="left:265px;top:128px;width:82px;height:2px;background:#fff"></div>
<div class="t" style="left:275px;top:110px;font-size:11px;letter-spacing:-0.1px;">main.ino</div>
<svg class="a" style="left:320px;top:110px;width:14px;height:14px" viewBox="0 0 14 14"><rect x="0.6" y="0.6" width="12.8" height="12.8" rx="2" fill="#e67e54" stroke="#d9351c" stroke-width="1.2"/><path d="M4 4L10 10M10 4L4 10" stroke="#fff" stroke-width="2.1" fill="none"/></svg>
<div class="a" style="left:266px;top:130px;width:45px;height:713px;background:#e0e0e0"></div>
<div class="a" style="left:1896px;top:130px;width:16px;height:714px;background:#f0f0f0"></div>
<div class="a" style="left:1896px;top:180px;width:15px;height:173px;background:#cdcdcd"></div>
<svg class="a" style="left:1898px;top:135px;width:11px;height:8px" viewBox="0 0 11 8"><path d="M2 6L5.5 2.5L9 6" stroke="#505050" stroke-width="2" fill="none"/></svg>
<svg class="a" style="left:1898px;top:831px;width:11px;height:8px" viewBox="0 0 11 8"><path d="M2 2L5.5 5.5L9 2" stroke="#505050" stroke-width="2" fill="none"/></svg>
<div class="a" style="left:266px;top:844px;width:1646px;height:16px;background:#f0f0f0"></div>
<div class="a" style="left:283px;top:844px;width:145px;height:15px;background:#cdcdcd"></div>
<svg class="a" style="left:270px;top:846px;width:8px;height:11px" viewBox="0 0 8 11"><path d="M6.4 2.2L2.6 5.5L6.4 8.8" stroke="#505050" stroke-width="2" fill="none"/></svg>
<svg class="a" style="left:1883px;top:846px;width:8px;height:11px" viewBox="0 0 8 11"><path d="M1.6 2.2L5.4 5.5L1.6 8.8" stroke="#505050" stroke-width="2" fill="none"/></svg>
<div class="ln" style="top:132px">7</div>
<div class="code" style="top:132px"><span class="n">#include &lt;OneWire.h&gt;</span></div>
<div class="ln" style="top:154px">8</div>
<div class="ln" style="top:176px">9</div>
<div class="code" style="top:176px">OneWire  ds(<span class="n">10</span>);  <span class="c">// on pin 10 (a 4.7K resistor is necessary)</span></div>
<div class="ln" style="top:198px">10</div>
<div class="code" style="top:198px">#define BAUDRATE <span class="n">9600</span></div>
<div class="ln" style="top:220px">11</div>
<div class="ln" style="top:242px">12</div>
<div class="code" style="top:242px"><span class="k">boolean</span> started <span class="o">=</span> <span class="k">false</span>;</div>
<div class="ln" style="top:264px">13</div>
<div class="ln" style="top:286px">14</div>
<div class="code" style="top:286px"><span class="k">void</span> <span class="f">setup</span>(<span class="k">void</span>) {</div>
<div class="ln" style="top:308px">15</div>
<div class="code" style="top:308px">  <span class="f">Serial</span>.<span class="f">begin</span>(BAUDRATE);</div>
<div class="ln" style="top:330px">16</div>
<div class="code" style="top:330px">}</div>
<div class="ln" style="top:352px">17</div>
<div class="ln" style="top:374px">18</div>
<div class="code" style="top:374px"><span class="k">void</span> <span class="f">loop</span>(<span class="k">void</span>) {</div>
<div class="ln" style="top:396px">19</div>
<div class="code" style="top:396px">  <span class="k">byte</span> i;</div>
<div class="ln" style="top:418px">20</div>
<div class="code" style="top:418px">  <span class="k">byte</span> present <span class="o">=</span> <span class="n">0</span>;</div>
<div class="ln" style="top:440px">21</div>
<div class="code" style="top:440px">  <span class="k">byte</span> type_s;</div>
<div class="ln" style="top:462px">22</div>
<div class="code" style="top:462px">  <span class="k">byte</span> data[<span class="n">12</span>];</div>
<div class="ln" style="top:484px">23</div>
<div class="code" style="top:484px">  <span class="k">byte</span> addr[<span class="n">8</span>];</div>
<div class="ln" style="top:506px">24</div>
<div class="code" style="top:506px">  <span class="k">float</span> celsius, fahrenheit;</div>
<div class="ln" style="top:528px">25</div>
<div class="ln" style="top:550px">26</div>
<div class="code" style="top:550px">  <span class="k">if</span> ( !ds.search(addr)) {</div>
<div class="ln" style="top:572px">27</div>
<div class="code" style="top:572px">    <span class="f">Serial</span>.<span class="f">println</span>(<span class="s">&quot;No more addresses.&quot;</span>);</div>
<div class="ln" style="top:594px">28</div>
<div class="code" style="top:594px">    <span class="f">Serial</span>.<span class="f">println</span>();</div>
<div class="ln" style="top:616px">29</div>
<div class="code" style="top:616px">    ds.reset_search();</div>
<div class="ln" style="top:638px">30</div>
<div class="code" style="top:638px">    <span class="f">delay</span>(<span class="n">250</span>);</div>
<div class="ln" style="top:660px">31</div>
<div class="code" style="top:660px">    <span class="k">return</span>;</div>
<div class="ln" style="top:682px">32</div>
<div class="code" style="top:682px">  }</div>
<div class="ln" style="top:704px">33</div>
<div class="ln" style="top:726px">34</div>
<div class="code" style="top:726px">  <span class="f">Serial</span>.<span class="f">print</span>(<span class="s">&quot;ROM =&quot;</span>);</div>
<div class="ln" style="top:748px">35</div>
<div class="code" style="top:748px">  <span class="k">for</span>( i <span class="o">=</span> <span class="n">0</span>; i <span class="o">&lt;</span> <span class="n">8</span>; i<span class="o">++</span>) {</div>
<div class="ln" style="top:770px">36</div>
<div class="code" style="top:770px">    <span class="f">Serial</span>.write(<span class="n">&#x27; &#x27;</span>);</div>
<div class="ln" style="top:792px">37</div>
<div class="code" style="top:792px">    <span class="f">Serial</span>.<span class="f">print</span>(addr[i], <span class="f">HEX</span>);</div>
<div class="ln" style="top:814px">38</div>
<div class="code" style="top:814px">  }</div>
<div class="dockh" style="left:4px;top:869px;width:1912px;height:19px"></div>
<div class="t" style="left:5px;top:872px;font-size:11px;letter-spacing:-0.24px;">Sortie VSM studio</div>
<svg class="ic" style="left:1886px;top:874px;width:9px;height:9px" viewBox="0 0 9 9" >
<path d="M2.5 2.5V0.8H8.2V5.5H6.5" fill="none" stroke="#000" stroke-width="1.3"/>
<path d="M2.5 1.2H8.2" stroke="#000" stroke-width="1.8"/>
<rect x="0.7" y="3.2" width="5.6" height="5.1" fill="#fff" stroke="#000" stroke-width="1.3"/>
<path d="M0.7 3.7H6.3" stroke="#000" stroke-width="1.8"/>
</svg>
<svg class="a" style="left:1902px;top:874px;width:10px;height:9px" viewBox="0 0 10 9"><path d="M1.5 1.5L8.5 7.5M8.5 1.5L1.5 7.5" stroke="#000" stroke-width="1.45" fill="none"/></svg>
<div class="box" style="left:4px;top:890px;width:1912px;height:123px"></div>
<div id="status" class="a"></div>
<div class="a" style="left:258px;top:1013px;width:5px;height:27px;background:#e5ecf3"></div>
<div class="a" style="left:257px;top:1015px;width:1px;height:25px;background:#a6c7dc"></div>
<div class="grip" style="left:3px;top:1015px;height:25px"></div><div class="grip" style="left:266px;top:1015px;height:25px"></div>
<svg class="a" style="left:20px;top:1016.6px;width:135px;height:20px" viewBox="0 0 135 20"><path d="M5 2.5V17.5L13.5 10Z" fill="#0a56c0"/><path d="M40 2.5H42V17.5H40Z M44 2.5V17.5L52.5 10Z" fill="#0a56c0"/><path d="M77 2.5H80V17.5H77Z M82.5 2.5H85.5V17.5H82.5Z" fill="#0a56c0"/><rect x="111" y="3.5" width="13" height="13" fill="#0a56c0"/></svg>
<div class="a" style="left:158px;top:1019px;width:1px;height:17px;background:#a0a6ac;box-shadow:1px 0 0 #fbfdfe"></div>
<svg class="ic" style="left:170px;top:1020px;width:14px;height:14px" viewBox="0 0 14 14" >
<defs><radialGradient id="ig" cx=".4" cy=".3" r=".8"><stop offset="0" stop-color="#22b422"/><stop offset=".6" stop-color="#0c8c0c"/><stop offset="1" stop-color="#055c05"/></radialGradient></defs>
<circle cx="7" cy="7" r="6.8" fill="url(#ig)"/>
<circle cx="7" cy="3.6" r="1.3" fill="#fff"/>
<path d="M5.2 5.8H8.2V10.2H9.2V11.4H5V10.2H6V7H5.2Z" fill="#fff"/>
</svg>
<div class="t" style="left:191.5px;top:1021px;font-size:11px;letter-spacing:-0.16px;">58 Messag...</div>
<div class="t" style="left:276px;top:1021px;font-size:11px;letter-spacing:-0.2px;">Ready</div>
</body></html>
